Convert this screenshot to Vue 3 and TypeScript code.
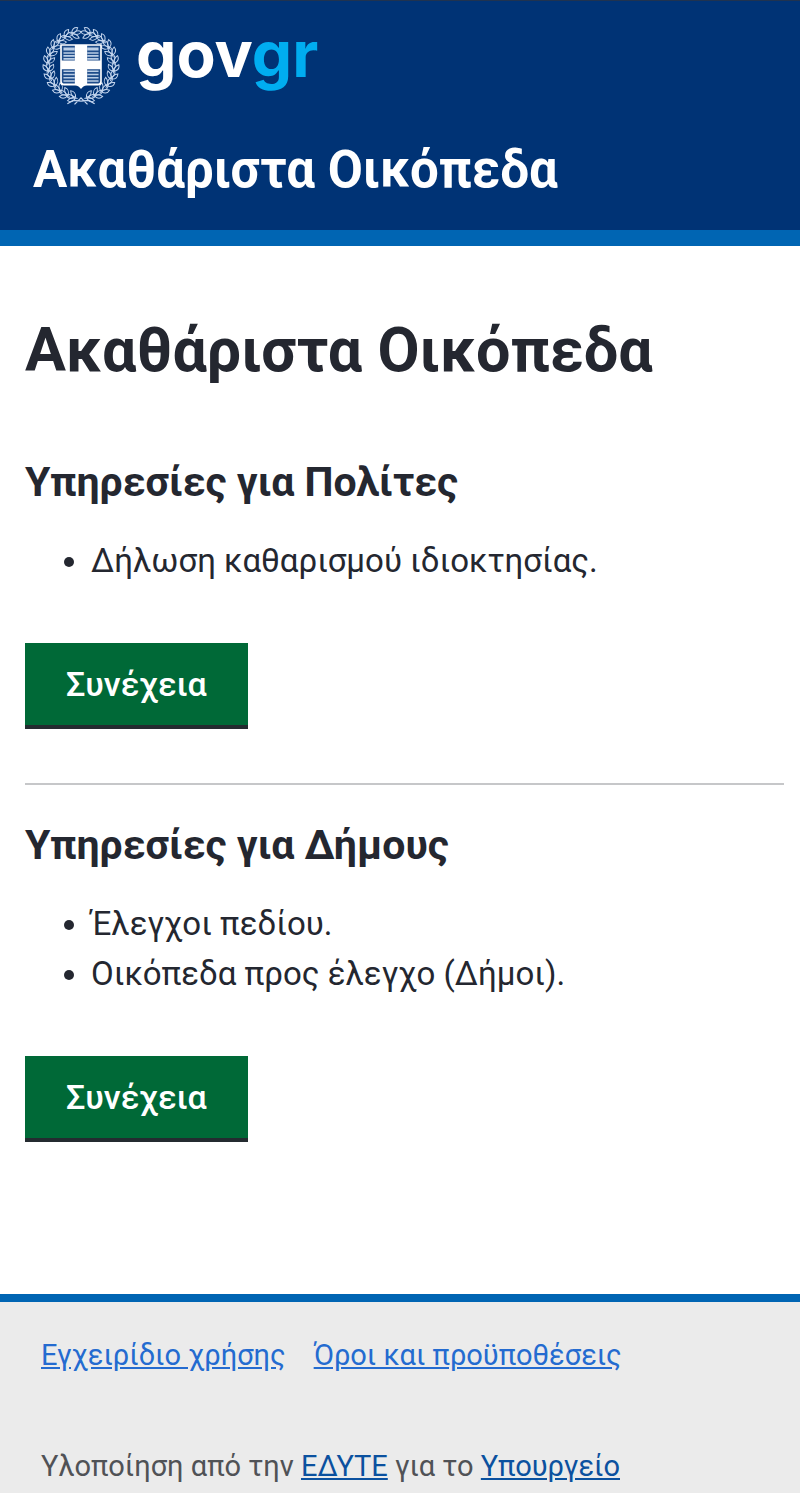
<script setup lang="ts">
interface Service {
  title: string
  items: string[]
}

const services: Service[] = [
  { title: 'Υπηρεσίες για Πολίτες', items: ['Δήλωση καθαρισμού ιδιοκτησίας.'] },
  { title: 'Υπηρεσίες για Δήμους', items: ['Έλεγχοι πεδίου.', 'Οικόπεδα προς έλεγχο (Δήμοι).'] },
]

// Laurel sprigs climb each side of the emblem from the bottom knot to the top.
const sprigs = Array.from({ length: 12 }, (_, i) => 164 - i * 14)
</script>

<template>
  <div class="page">
    <header class="header">
      <a class="brand" href="#" aria-label="govgr">
        <svg class="emblem" viewBox="0 0 240 240" aria-hidden="true">
          <defs>
            <g id="sprig" fill="none" stroke="#c3d5ee" stroke-width="3">
              <path d="M-2 11C-12 9-19 1-17-9C-8-6-1 2-2 11Z" />
              <path d="M2 11C12 8 18 0 15-10C6-6 0 2 2 11Z" />
              <path d="M0 6C-7-2-6-12 0-19C7-12 7-2 0 6ZM0 6V18" />
            </g>
          </defs>
          <g v-for="side in [1, -1]" :key="side" :transform="`translate(120 118) scale(${side} 1)`">
            <use
              v-for="angle in sprigs"
              :key="angle"
              href="#sprig"
              :transform="`rotate(${angle}) translate(0 -101) rotate(-90)`"
            />
          </g>
          <path d="M78 236L96 226L120 228L144 226L162 236M100 238L120 218L140 238" fill="none" stroke="#c3d5ee" stroke-width="4" />
          <path d="M56 53H184V170Q184 180 172 180H138Q126 181 120 191Q114 181 102 180H68Q56 180 56 170Z" fill="#fff" />
          <path d="M61 58H101V103H61ZM139 58H179V103H139ZM61 130H101V174H70Q61 174 61 166ZM139 130H179V166Q179 174 170 174H139Z" fill="#1e4c8a" />
          <path d="M66 63H101V72H66ZM139 63H174V72H139Z" fill="#bacde5" />
          <path
            d="M66 80H101M66 89H101M66 98H101M139 80H174M139 89H174M139 98H174M66 136H101M66 146H101M66 156H101M66 166H101M139 136H174M139 146H174M139 156H174M139 166H174"
            stroke="#bacde5"
            stroke-width="5"
          />
        </svg>
        <span class="wordmark">gov<span class="wordmark-accent">gr</span></span>
      </a>
      <a class="service-name" href="#">Ακαθάριστα Οικόπεδα</a>
    </header>

    <main class="main">
      <h1>Ακαθάριστα Οικόπεδα</h1>
      <section v-for="service in services" :key="service.title" class="service">
        <h2>{{ service.title }}</h2>
        <ul>
          <li v-for="item in service.items" :key="item">{{ item }}</li>
        </ul>
        <button type="button">Συνέχεια</button>
      </section>
    </main>

    <footer class="footer">
      <nav class="footer-links">
        <a href="#">Εγχειρίδιο χρήσης</a>
        <a href="#">Όροι και προϋποθέσεις</a>
      </nav>
      <p>Υλοποίηση από την <a href="#">ΕΔΥΤΕ</a> για το <a href="#">Υπουργείο</a></p>
    </footer>
  </div>
</template>

<style>
body {
  margin: 0;
  background: #fff;
}
</style>

<style scoped>
.page {
  color: #242730;
  font-family: Roboto, "Noto Sans", sans-serif;
}

.header {
  padding: 25px 33px 28px;
  border-top: 1px solid #20334f;
  border-bottom: 16px solid #0065b3;
  background: #003375;
}

.brand {
  display: flex;
  align-items: flex-start;
  gap: 16px;
  height: 84px;
  padding-left: 9px;
  color: #fff;
  text-decoration: none;
}

.emblem {
  width: 78px;
  height: 80px;
}

.wordmark {
  font-family: Inter, sans-serif;
  font-size: 64px;
  font-weight: 700;
  line-height: 56px;
}

.wordmark-accent {
  color: #00adf0;
}

.service-name {
  display: block;
  margin-top: 28px;
  color: #fff;
  font-size: 51px;
  font-weight: 700;
  line-height: 64px;
  text-decoration: none;
}

.main {
  padding: 64px 16px 152px 25px;
}

h1 {
  margin: 0 0 64px;
  font-size: 61px;
  font-weight: 700;
  line-height: 80px;
}

h2 {
  margin: 0 0 26px;
  font-size: 41px;
  font-weight: 700;
  line-height: 56px;
}

ul {
  margin: 0 0 57px;
  padding-left: 66px;
  font-size: 33px;
  line-height: 50px;
}

.service + .service {
  margin-top: 54px;
  padding-top: 32px;
  border-top: 2px solid #c6c7c9;
}

button {
  display: block;
  min-height: 86px;
  padding: 0 41px;
  border: 0;
  border-bottom: 4px solid #242b30;
  background: #006937;
  color: #fff;
  font-family: inherit;
  font-size: 34px;
  font-weight: 500;
  cursor: pointer;
}

.footer {
  padding: 32px 41px 6px;
  border-top: 8px solid #0065b3;
  background: #ebebeb;
  color: #505256;
  font-size: 29px;
  line-height: 42px;
}

.footer-links {
  display: flex;
  flex-wrap: wrap;
  gap: 28px;
}

.footer-links a {
  color: #246bd0;
}

.footer p {
  margin: 69px 0 0;
}

.footer p a {
  color: #0b519f;
}
</style>
